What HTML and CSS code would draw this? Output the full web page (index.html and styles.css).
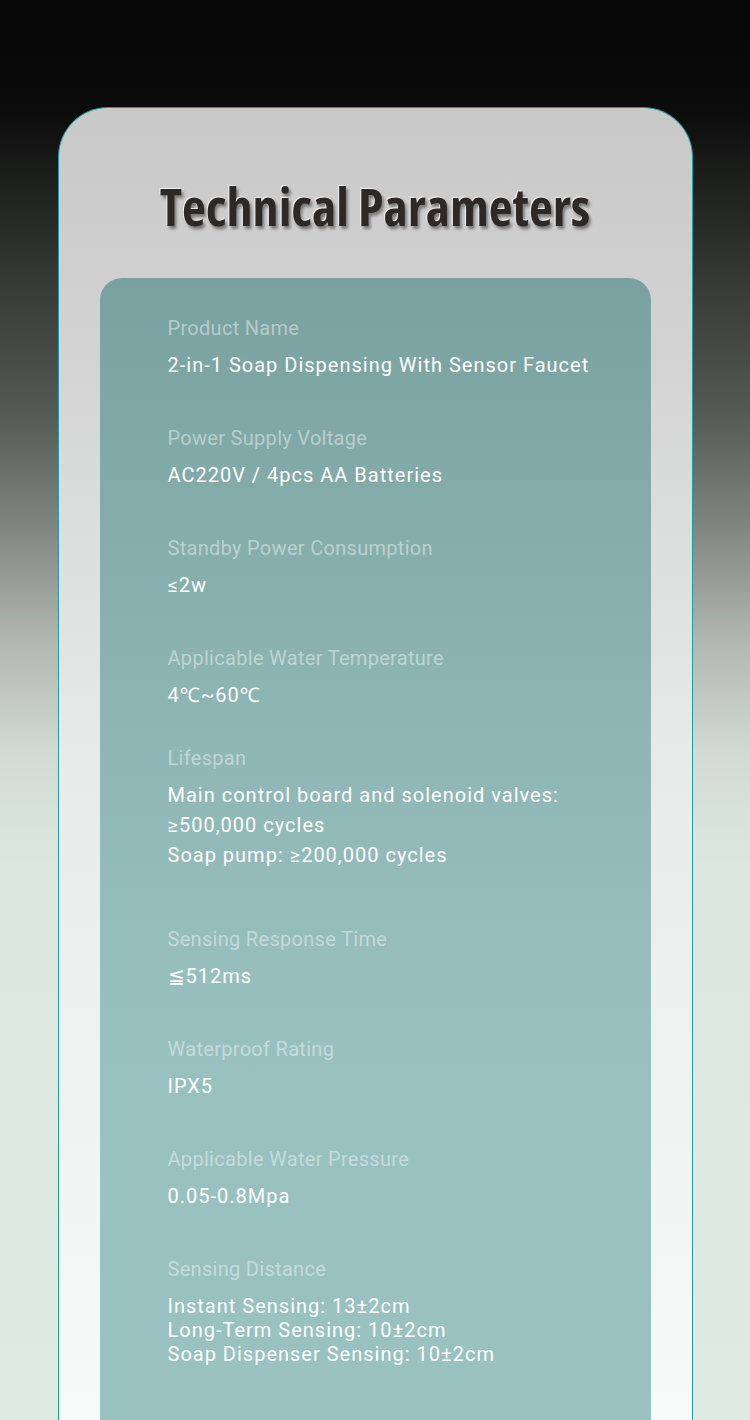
FILE: index.html
```html
<!DOCTYPE html>
<html lang="en">
<head>
<meta charset="utf-8">
<title>Technical Parameters</title>
<link rel="stylesheet" href="styles.css">
</head>
<body>
<div class="page">
  <section class="card">
    <h1 class="title">Technical Parameters</h1>
    <div class="panel">
      <div class="item">
        <div class="label">Product Name</div>
        <div class="value">2-in-1 Soap Dispensing With Sensor Faucet</div>
      </div>
      <div class="item">
        <div class="label">Power Supply Voltage</div>
        <div class="value">AC220V / 4pcs AA Batteries</div>
      </div>
      <div class="item">
        <div class="label">Standby Power Consumption</div>
        <div class="value">≤2w</div>
      </div>
      <div class="item item-tight">
        <div class="label">Applicable Water Temperature</div>
        <div class="value">4℃~60℃</div>
      </div>
      <div class="item item-loose">
        <div class="label">Lifespan</div>
        <div class="value">Main control board and solenoid valves:<br>≥500,000 cycles<br>Soap pump: ≥200,000 cycles</div>
      </div>
      <div class="item">
        <div class="label">Sensing Response Time</div>
        <div class="value">≦512ms</div>
      </div>
      <div class="item">
        <div class="label">Waterproof Rating</div>
        <div class="value">IPX5</div>
      </div>
      <div class="item">
        <div class="label">Applicable Water Pressure</div>
        <div class="value">0.05-0.8Mpa</div>
      </div>
      <div class="item">
        <div class="label">Sensing Distance</div>
        <div class="value value-dense">Instant Sensing: 13±2cm<br>Long-Term Sensing: 10±2cm<br>Soap Dispenser Sensing: 10±2cm</div>
      </div>
    </div>
  </section>
</div>
</body>
</html>
```

FILE: styles.css
```css
html, body {
  margin: 0;
  padding: 0;
}

body {
  width: 750px;
  height: 1420px;
  overflow: hidden;
  font-family: Roboto, "Noto Sans", sans-serif;
}

.page {
  height: 1420px;
  overflow: hidden;
  padding-top: 107px;
  box-sizing: border-box;
  background: linear-gradient(to bottom,
    #050505 0%,
    #0c0c0c 8%,
    #222422 14%,
    #3a3d3a 21%,
    #555955 29%,
    #80857f 37%,
    #b0b7ae 45%,
    #d1dbd1 53%,
    #dce8de 61%,
    #dfeae1 100%);
}

.card {
  margin: 0 auto;
  width: 635px;
  height: 1313px;
  box-sizing: border-box;
  border: 1.5px solid #1f9c9c;
  border-bottom: none;
  border-radius: 50px 50px 0 0;
  background: linear-gradient(to bottom, #c8c8c8 0%, #d4d4d4 20%, #e8ebea 50%, #f6faf8 100%);
  padding: 68px 41px 0 41px;
}

.title {
  margin: 0;
  text-align: center;
  font-family: "Open Sans", sans-serif;
  font-weight: 700;
  font-size: 52px;
  line-height: 60px;
  font-stretch: 80%;
  letter-spacing: 0;
  color: #2d2927;
  text-shadow: -1px -1px 0 rgba(255,255,255,0.7), 2px 3px 3px rgba(0,0,0,0.4);
}

.panel {
  margin-top: 42px;
  height: 1200px;
  border-radius: 22px 22px 0 0;
  background: linear-gradient(to bottom, #79a19f 0%, #8db5b3 35%, #98c0bf 60%, #99c2c1 100%);
  padding: 38px 40px 0 68px;
}

.item + .item {
  margin-top: 46px;
}

.item-tight + .item {
  margin-top: 36px;
}

.item-loose + .item {
  margin-top: 57px;
}

.label {
  font-size: 20px;
  line-height: 24px;
  color: rgba(255,255,255,0.45);
  letter-spacing: 0.3px;
}

.value {
  margin-top: 10px;
  font-size: 20px;
  line-height: 30px;
  color: #ffffff;
  letter-spacing: 1px;
}

.value-dense {
  margin-top: 13px;
  line-height: 24px;
}
```
